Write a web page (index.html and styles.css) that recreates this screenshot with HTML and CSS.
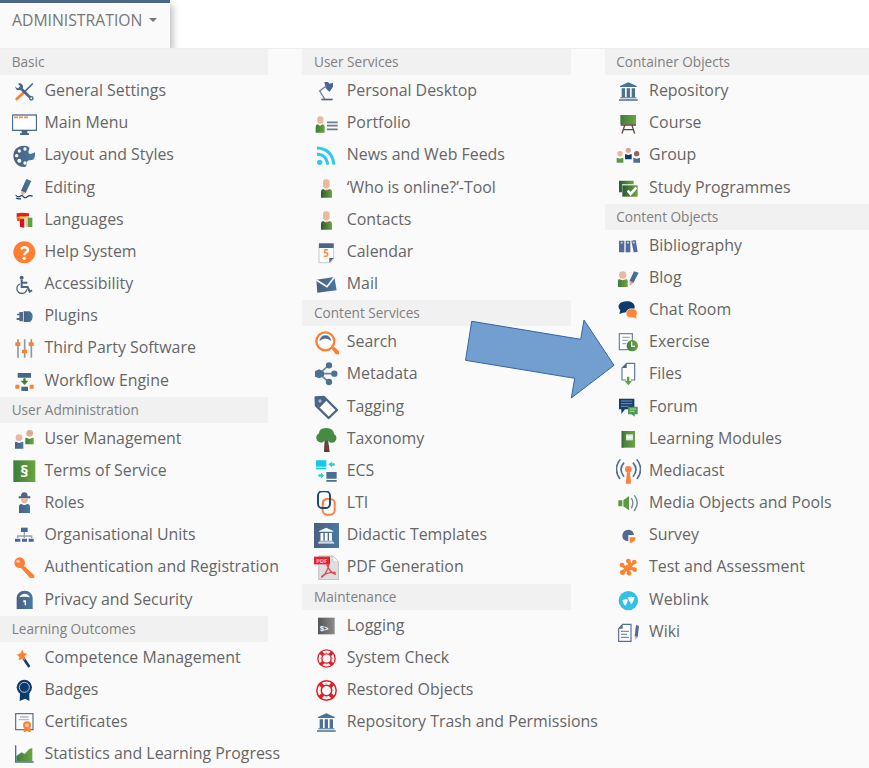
FILE: index.html
```html
<!DOCTYPE html>
<html lang="en">
<head>
<meta charset="utf-8">
<title>Administration</title>
<link rel="stylesheet" href="styles.css">
</head>
<body>
<svg class="defs" width="0" height="0" aria-hidden="true">
  <defs>
    <linearGradient id="gr"><stop offset="0" stop-color="#3d7d3e"/><stop offset="1" stop-color="#6ca43f"/></linearGradient>
    <linearGradient id="bl"><stop offset="0" stop-color="#4a6080"/><stop offset="1" stop-color="#4878a0"/></linearGradient>
    <linearGradient id="gy"><stop offset="0" stop-color="#555"/><stop offset="1" stop-color="#8c8c8c"/></linearGradient>
    <linearGradient id="dg"><stop offset="0" stop-color="#285b36"/><stop offset="1" stop-color="#6ca43f"/></linearGradient>
    <symbol id="person" viewBox="0 0 75 75">
      <rect x="27" y="10" width="20" height="27" rx="9" fill="#e8b8a0"/>
      <path d="M21 65V47q0-7 7-8l9 5 9-5q8 1 8 8v18z" fill="url(#dg)"/>
      <path d="M32 37h11l-6 8z" fill="#f3d9d0"/><path d="M35 41l3 5 2-5z" fill="#d33"/>
    </symbol>
    <symbol id="temple" viewBox="0 0 75 75">
      <path d="M37 10l25 11v3H12v-3z"/><path d="M17 28h10v27H17zM32 28h10v27H32zM47 28h10v27H47z"/><path d="M13 55h48v3H13zM9 61h56v4H9z"/>
    </symbol>
    <symbol id="buoy" viewBox="0 0 75 75">
      <g fill="none" stroke="#dc2028"><circle cx="37.500" cy="37.500" r="26" stroke-width="4"/><circle cx="37.500" cy="37.500" r="14" stroke-width="4"/>
      <path d="M19 18l9 9M56 18l-9 9M19 57l9-9M56 57l-9-9" stroke-width="10"/><path d="M37 18v2M37 55v2M18 37h2M55 37h2" stroke="#e88" stroke-width="3"/></g>
    </symbol>
  </defs>
</svg>

<header class="bar">
  <div class="tab">ADMINISTRATION<span class="caret"></span></div>
</header>

<main class="menu">
  <section class="col">
    <h2>Basic</h2>
    <ul>
      <li><svg viewBox="0 0 75 75"><path d="M14 60l24-22" stroke="#ff7f33" stroke-width="8" stroke-linecap="round"/><path d="M36 40L61 15" stroke="#4a6c90" stroke-width="5" stroke-linecap="round"/><path d="M22 24l34 33" stroke="#4a6588" stroke-width="8"/><path d="M18 15l7 7-3 6-8-1-4-6q0 12 9 13 13 0 14-10 0-10-11-11z" fill="#4a6588"/><circle cx="58" cy="58" r="5" fill="#fafafa" stroke="#4a6588" stroke-width="4"/></svg>General Settings</li>
      <li><svg viewBox="0 0 75 75"><rect x="1.500" y="12" width="72" height="46" fill="#fff" stroke="#4b6f92" stroke-width="4"/><path d="M6 19h42" stroke="#ff8850" stroke-width="5" stroke-dasharray="12 3"/><path d="M29 58h17v9h5v5H24v-5h5z" fill="#4b6585"/></svg>Main Menu</li>
      <li><svg viewBox="0 0 75 75"><path d="M38 8C18 7 4 20 4 38c0 19 14 34 32 34 9 0 7-6 8-12 1-7 7-9 15-9 9 0 11-12 10-23l-13 5q-9-1-6-10l3-8Q47 8 38 8z" fill="url(#bl)"/><g fill="#fafafa"><circle cx="39" cy="18" r="5"/><circle cx="22" cy="24" r="5"/><circle cx="14" cy="38" r="5"/><circle cx="22" cy="53" r="6"/><circle cx="39" cy="60" r="5"/></g></svg>Layout and Styles</li>
      <li><svg viewBox="0 0 75 75"><path d="M43 9l15 6-17 36-14-7z" fill="url(#bl)"/><path d="M27 44l14 7-12 8z" fill="#e8b090"/><path d="M11 57q6 8 13 4 6-5 11 2 5 5 11-1 7-6 16-1M12 66q8 4 15 2" fill="none" stroke="#123d66" stroke-width="3.500"/></svg>Editing</li>
      <li><svg viewBox="0 0 75 75"><path d="M14 16l17-2 20 2v9l-37 5z" fill="#e32020"/><path d="M15 28l10-3 25 1v5l-35 2z" fill="#ffc928"/><path d="M23 32h14v27l-13-2z" fill="#d8141c"/><path d="M14 29h9v10h-7z" fill="#ef4a20"/><path d="M40 31h6v26h-6z" fill="#c2d9b0"/><path d="M47 29h14v28H47z" fill="#65a03e"/></svg>Languages</li>
      <li><svg viewBox="0 0 75 75"><circle cx="37" cy="37" r="33" fill="#ff7f33"/><path d="M27 27q10-9 18-3 7 7-2 13-6 4-6 9" fill="none" stroke="#fff" stroke-width="7.500"/><circle cx="37" cy="55" r="5" fill="#fff"/></svg>Help System</li>
      <li><svg viewBox="0 0 75 75"><circle cx="29" cy="17" r="6" fill="#4b6585"/><path d="M29 23v22h18l6 14 7-4M30 32h16" fill="none" stroke="#4b6585" stroke-width="6"/><path d="M24 36q-11 5-9 17 5 13 18 11 9-2 12-12" fill="none" stroke="#4b6585" stroke-width="4"/></svg>Accessibility</li>
      <li><svg viewBox="0 0 75 75"><path d="M35 22h19q8 6 8 16t-8 16H35z" fill="url(#bl)"/><path d="M22 24h11v28H22zM15 29h9v5h-9zM14 42h10v6H14z" fill="#52698a"/></svg>Plugins</li>
      <li><svg viewBox="0 0 75 75"><path d="M18 10v55M38 10v55M58 10v55" stroke="#8a9bb0" stroke-width="5"/><path d="M10 19h15v11H10zM30 41h15v11H30zM50 19h15v11H50z" fill="#ff7f33"/></svg>Third Party Software</li>
      <li><svg viewBox="0 0 75 75"><path d="M17 12h40v14H17zM28 53h20v13H28z" fill="#4b6585"/><path d="M34 28h7v7h8L38 48 26 35h8z" fill="#447a32"/><path d="M10 47h12v12H10zM53 47h12v12H53z" fill="#ff7f33"/></svg>Workflow Engine</li>
    </ul>
    <h2>User Administration</h2>
    <ul>
      <li><svg viewBox="0 0 75 75"><circle cx="21" cy="32" r="10" fill="#e8b8a0"/><circle cx="53" cy="19" r="10" fill="#e0ab92"/><path d="M9 65V47q0-3 3-3l9 4 10-4q3 0 3 3v18z" fill="url(#bl)"/><path d="M40 52V35q0-3 3-3l9 4 10-4q3 0 3 3v17z" fill="url(#gr)"/></svg>User Management</li>
      <li><svg viewBox="0 0 75 75"><rect x="4" y="4" width="66" height="65" fill="url(#gr)"/><text x="37" y="53" font-size="50" font-weight="700" text-anchor="middle" fill="#fff">§</text></svg>Terms of Service</li>
      <li><svg viewBox="0 0 75 75"><path d="M27 16q0-12 10-12t10 12h8v6H20v-6z" fill="#4b6585"/><path d="M27 22h21q0 15-11 15T27 22z" fill="#e8b8a0"/><path d="M21 66V47q0-8 7-8l9 4 9-4q8 0 8 8v19z" fill="url(#bl)"/></svg>Roles</li>
      <li><svg viewBox="0 0 75 75"><path d="M27 14h20v13H27z" fill="#4b6595"/><path d="M37 27v18M17 45V39h42v7" fill="none" stroke="#93a3b5" stroke-width="4"/><path d="M9 47h16v9H9zM30 47h15v9H30zM50 47h15v9H50z" fill="#4b6595"/></svg>Organisational Units</li>
      <li><svg viewBox="0 0 75 75"><circle cx="23" cy="23" r="16" fill="#ff7f33"/><path d="M30 30l35 32v5H55L27 36z" fill="#ff7f33" stroke="#ff7f33" stroke-width="4"/><circle cx="18" cy="19" r="5" fill="#ffd0b0"/></svg>Authentication and Registration</li>
      <li><svg viewBox="0 0 75 75"><path d="M14 63V29Q16 9 38 8q22 1 24 21v34z" fill="url(#bl)"/><path d="M22 28q5-11 16-11t16 11q-16-4-32 0z" fill="#fafafa"/><path d="M34 37h8v15h-4V43h-4z" fill="#fff"/></svg>Privacy and Security</li>
    </ul>
    <h2>Learning Outcomes</h2>
    <ul>
      <li><svg viewBox="0 0 75 75"><path d="M34 36l18 27" stroke="#173d68" stroke-width="8"/><path d="M32 13l2 9 10 2-8 7 3 11-9-5-9 5 2-9-7-7 9-3z" fill="#ff7f33" stroke="#ff7f33" stroke-width="2"/></svg>Competence Management</li>
      <li><svg viewBox="0 0 75 75"><path d="M24 42h28v27l-12-7-17 7z" fill="#0c3b6c"/><circle cx="37" cy="28" r="23" fill="#0c3b6c"/><circle cx="37" cy="28" r="15" fill="none" stroke="#b4c5d6" stroke-width="3"/></svg>Badges</li>
      <li><svg viewBox="0 0 75 75"><rect x="11" y="11" width="52" height="48" fill="#fff" stroke="#4b6f92" stroke-width="3.500"/><path d="M24 21h26M20 29h31" stroke="#aab8c8" stroke-width="4"/><circle cx="45" cy="46" r="9" fill="#ffc9a6" stroke="#ff7f33" stroke-width="6"/><path d="M36 55h7l2 5 3-5h8v12l-7-2-4-3-4 3-6 2z" fill="#ff7f33"/></svg>Certificates</li>
      <li><svg viewBox="0 0 75 75"><path d="M13 58V42l16-11 9 5 14-15 9-3v40z" fill="url(#gr)"/><path d="M11 10v50h54" fill="none" stroke="#4b6f92" stroke-width="4"/></svg>Statistics and Learning Progress</li>
    </ul>
  </section>

  <section class="col">
    <h2>User Services</h2>
    <ul>
      <li><svg viewBox="0 0 75 75"><path d="M31 9h11l4 5 11-3v12L47 38q-7-3-12-12z" fill="#4b6595"/><path d="M38 20L17 36l15 24" fill="none" stroke="#6d809c" stroke-width="4"/><path d="M22 59h34v5H22z" fill="#4b6585"/></svg>Personal Desktop</li>
      <li><svg viewBox="0 0 75 75"><rect x="10" y="16" width="18" height="22" rx="8" fill="#e8b8a0"/><path d="M5 65V48q0-7 6-8l7 4 8-4q6 1 6 8v17z" fill="url(#gr)"/><path d="M39 34h32M39 44h32M39 55h32" stroke="#687c98" stroke-width="5"/></svg>Portfolio</li>
      <li><svg viewBox="0 0 75 75"><circle cx="17" cy="58" r="8" fill="#33c8e8"/><path d="M9 34q28 0 32 31M9 15q45 2 51 50" fill="none" stroke="#33c8e8" stroke-width="9"/></svg>News and Web Feeds</li>
      <li><svg><use href="#person"/></svg>‘Who is online?’-Tool</li>
      <li><svg><use href="#person"/></svg>Contacts</li>
      <li><svg viewBox="0 0 75 75"><path d="M15 12h44v45l-12 11H15z" fill="#fff" stroke="#c0cad5" stroke-width="3"/><path d="M15 10h44v14H15z" fill="#4b6585"/><path d="M46 54h13L46 68z" fill="#4b6585"/><text x="36" y="52" font-size="30" font-weight="700" text-anchor="middle" fill="#ff8a3d">5</text></svg>Calendar</li>
      <li><svg viewBox="0 0 75 75"><path d="M7 23l54-8 7 40-58 7z" fill="url(#bl)"/><path d="M7 24l32 20 22-28" fill="none" stroke="#fff" stroke-width="5"/></svg>Mail</li>
    </ul>
    <h2>Content Services</h2>
    <ul>
      <li><svg viewBox="0 0 75 75"><path d="M53 56l8-6 14 14v9H65z" fill="#ff7f33"/><circle cx="34" cy="34" r="27" fill="#fff" stroke="#ff7f33" stroke-width="7"/><path d="M16 33q18-15 36 0-4-17-18-17T16 33z" fill="#4b6f92"/></svg>Search</li>
      <li><svg viewBox="0 0 75 75"><path d="M16 35L45 9M16 35h45M16 35l29 26" stroke="#66849e" stroke-width="5"/><g fill="#4b7195"><path d="M3 27l13-5 14 7v13l-14 7-13-5z"/><circle cx="45" cy="10" r="9.500"/><circle cx="61" cy="35" r="9.500"/><circle cx="45" cy="60" r="9.500"/></g></svg>Metadata</li>
      <li><svg viewBox="0 0 75 75"><path d="M5 7l25-1 39 39-25 24L6 32z" fill="#fff" stroke="#4b6585" stroke-width="7" stroke-linejoin="round"/><path d="M4 6h27l8 9-22 23-13-12z" fill="#4b6585"/><circle cx="18" cy="18" r="5" fill="#a9b7c8"/></svg>Tagging</li>
      <li><svg viewBox="0 0 75 75"><path d="M32 38h10l5 37H30z" fill="#5b3b32"/><path d="M24 5q12-4 25 0 11 5 11 16 9 6 7 16-5 13-18 10l-7-6H32l-8 6Q9 47 7 34q-1-10 8-15 0-10 9-14z" fill="#458b43"/><path d="M36 42h3v26" stroke="#8a6a5e" stroke-width="2" fill="none"/></svg>Taxonomy</li>
      <li><svg viewBox="0 0 75 75"><path d="M6 4h31v19H6zM6 26h31v5H6z" fill="#12cbe8"/><path d="M43 16l11-8v5h8v7h-8v5zM31 50l-10 8v-5h-8v-7h8v-5z" fill="#32c8d8"/><path d="M37 39h31v20H37zM37 63h31v5H37z" fill="#4b6f92"/></svg>ECS</li>
      <li><svg viewBox="0 0 75 75"><rect x="26" y="24" width="36" height="47" rx="13" fill="none" stroke="#ff7f45" stroke-width="6"/><rect x="12" y="1" width="36" height="50" rx="13" fill="none" stroke="#174b7a" stroke-width="6"/><path d="M27 43V36q1-11 13-12" fill="none" stroke="#ff7f45" stroke-width="6"/></svg>LTI</li>
      <li><svg viewBox="0 0 75 75"><path d="M0 0h75v75H0z" fill="url(#bl)"/><use href="#temple" x="5" y="6" width="64" height="64" fill="#fff"/></svg>Didactic Templates</li>
      <li><svg viewBox="0 0 75 75"><path d="M14 3h43l17 17v54H14z" fill="#dedede" stroke="#aaa" stroke-width="2"/><path d="M57 3v17h17z" fill="#f8f8f8" stroke="#b0b0b0"/><path d="M22 68q11-8 18-24 7-18 2-19-7 1 2 15 7 14 22 18M22 65q15-14 43-13" fill="none" stroke="#df4850" stroke-width="4"/><path d="M0 5h48v23H0z" fill="#ee2024"/><text x="23" y="23" font-size="17" font-weight="700" text-anchor="middle" fill="#ffc8c8">PDF</text></svg>PDF Generation</li>
    </ul>
    <h2>Maintenance</h2>
    <ul>
      <li><svg viewBox="0 0 75 75"><path d="M12 11h50v50H12z" fill="url(#gy)"/><text class="mono" x="17" y="52" font-size="22" font-weight="700" fill="#fff">$&gt;</text></svg>Logging</li>
      <li><svg><use href="#buoy"/></svg>System Check</li>
      <li><svg viewBox="4 4 67 67"><use href="#buoy" width="75" height="75"/></svg>Restored Objects</li>
      <li><svg class="blue"><use href="#temple"/></svg>Repository Trash and Permissions</li>
    </ul>
  </section>

  <section class="col last">
    <h2>Container Objects</h2>
    <ul>
      <li><svg class="blue"><use href="#temple"/></svg>Repository</li>
      <li><svg viewBox="0 0 75 75"><path d="M13 12h47v28H13z" fill="url(#gr)"/><path d="M14 42h46M26 43l-8 25M48 43l8 25M22 56h30" fill="none" stroke="#614038" stroke-width="4"/></svg>Course</li>
      <li><svg class="wide" viewBox="0 0 75 75"><circle cx="12" cy="32" r="8" fill="#eab7a0"/><circle cx="37" cy="22" r="8" fill="#dba993"/><circle cx="62" cy="32" r="8" fill="#8b6a60"/><path d="M2 59V44l10 3 10-3v15z" fill="#5b9841"/><path d="M27 49V33l10 3 10-3v16z" fill="#0c3b6c"/><path d="M52 59V44l10 3 10-3v15z" fill="#4b7195"/></svg>Group</li>
      <li><svg viewBox="0 0 75 75"><path d="M9 14h44v11H18v24H9z" fill="url(#dg)"/><path d="M19 28h46v34H19z" fill="url(#dg)"/><path d="M35 44l9 10 17-19" fill="none" stroke="#fff" stroke-width="8"/></svg>Study Programmes</li>
    </ul>
    <h2>Content Objects</h2>
    <ul>
      <li><svg viewBox="0 0 75 75"><path d="M9 20h16v35H9zM29 20h14v35H29zM46 20l13-2 6 36-12 1z" fill="#526c95"/><path d="M14 26h6M33 26h6M50 26l6-1" stroke="#c5d0dc" stroke-width="5"/></svg>Bibliography</li>
      <li><svg viewBox="0 0 75 75"><circle cx="20" cy="27" r="11" fill="#eab7a0"/><path d="M6 63V44q0-4 4-4l10 3 11-3q4 0 4 4v19z" fill="url(#gr)"/><path d="M54 16l14 4-16 31-11-7z" fill="url(#bl)"/><path d="M41 44l11 7-11 8z" fill="#dda68c"/></svg>Blog</li>
      <li><svg viewBox="0 0 75 75"><path d="M32 10c14 0 24 6 24 17S45 43 32 43l-11 1-11 4 3-11C0 22 13 10 32 10z" fill="#0c3b6c"/><path d="M47 32c11 0 17 5 17 13q0 5-4 9l5 10-12-5c-15 2-23-4-23-13q2-14 17-14z" fill="#ff8538" stroke="#fafafa" stroke-width="2"/></svg>Chat Room</li>
      <li><svg viewBox="0 0 75 75"><rect x="10" y="11" width="39" height="48" fill="#fff" stroke="#6880a0" stroke-width="3.500"/><path d="M19 22h22M19 31h16M19 41h12" stroke="#9aabbf" stroke-width="4"/><circle cx="49" cy="47" r="17" fill="url(#gr)"/><path d="M47 35v14h10" fill="none" stroke="#fff" stroke-width="4"/></svg>Exercise</li>
      <li><svg viewBox="0 0 75 75"><path d="M31 54H18V18L32 4h24v50H44" fill="#fff" stroke="#5b789b" stroke-width="3.500"/><path d="M18 18L32 4v14z" fill="#4b6585"/><path d="M33 44h7v13h8L37 70 26 57h7z" fill="#65a03e"/></svg>Files</li>
      <li><svg viewBox="0 0 75 75"><path d="M9 11h46v32H27L16 57V43H9z" fill="#123e6d"/><path d="M15 18h34M15 26h34M15 34h22" stroke="#7793b3" stroke-width="3"/><path d="M36 35h29v23H56v7l-10-7H36z" fill="#4c9950"/><path d="M41 42h19M41 49h15" stroke="#b9d9b6" stroke-width="3"/></svg>Forum</li>
      <li><svg viewBox="0 0 75 75"><path d="M17 12h40v50H17z" fill="url(#gr)"/><path d="M17 12h5v50h-5z" fill="#356f3b"/><path d="M30 22h21v18H30z" fill="#dce9d5"/><path d="M33 28h16v6H33z" fill="#fff"/></svg>Learning Modules</li>
      <li><svg viewBox="0 0 75 75"><path d="M24 11q-18 20 0 42M13 1Q-10 30 12 60M51 11q18 20 0 42M62 1q23 29 1 59" fill="none" stroke="#536f94" stroke-width="5"/><circle cx="37" cy="31" r="10" fill="#ff7f45"/><path d="M33 40h9l3 34H29z" fill="#ff7f45"/></svg>Mediacast</li>
      <li><svg viewBox="0 0 75 75"><path d="M7 28h12v18H7zM22 28l17-13v43L22 46z" fill="#5d9b3d"/><path d="M46 21q9 15 0 31M55 13q18 23-1 47" fill="none" stroke="#6f84a3" stroke-width="4"/></svg>Media Objects and Pools</li>
      <li><svg viewBox="0 0 75 75"><path d="M54 36H37v19Q19 54 19 39q0-18 19-19 15 2 16 16z" fill="#526a91"/><path d="M41 43h18q-1 16-18 17z" fill="#ff832f"/></svg>Survey</li>
      <li><svg viewBox="0 0 75 75"><path d="M20 51L54 23M18 31l11 7M38 19l5 12M56 44l-12-6M40 54l-6-10" fill="none" stroke="#ff832f" stroke-width="9"/><path d="M30 30l15-3 4 17-17 4z" fill="#ff832f"/><g fill="#ff832f"><circle cx="18" cy="30" r="7"/><circle cx="37" cy="18" r="7"/><circle cx="55" cy="21" r="7"/><circle cx="56" cy="44" r="7"/><circle cx="39" cy="55" r="7"/><circle cx="20" cy="52" r="8"/></g></svg>Test and Assessment</li>
      <li><svg viewBox="0 0 75 75"><circle cx="37" cy="38" r="29" fill="#31c1e3"/><path d="M19 37l11-5 6 4-3 8-5 9-5-5zM36 28l8-2 12 2-3 9-6 12-6-8-4-8z" fill="#fff"/></svg>Weblink</li>
      <li><svg viewBox="0 0 75 75"><path d="M8 26L20 13h25v51H8z" fill="#fff" stroke="#536f94" stroke-width="3.500"/><path d="M8 26L20 13v13z" fill="#536f94"/><path d="M15 34h24M15 43h18M15 52h24" stroke="#7a90aa" stroke-width="3.500"/><path d="M60 15l9 3-4 34-9-3z" fill="#526a91"/><path d="M56 49l9 3-7 8z" fill="#d8b39d"/></svg>Wiki</li>
    </ul>
  </section>
</main>

<svg class="pointer" viewBox="465 319 150 80"><path d="M471.700 321.300L580.700 339.300 584 320 614 365.300 571.300 398 574.700 378.300 465.500 360.300z" fill="#729fcf" stroke="#3465a4"/></svg>
</body>
</html>
```

FILE: styles.css
```css
* { box-sizing: border-box; }

body {
  margin: 0;
  width: 869px;
  height: 768px;
  overflow: hidden;
  position: relative;
  background: #fff;
  color: #666;
  font-family: "Open Sans", "Noto Sans", sans-serif;
}

.defs { display: block; }

.bar {
  height: 48px;
  overflow: hidden;
}

.tab {
  display: flex;
  align-items: center;
  width: 169.500px;
  height: 48px;
  padding: 0 0 12px 12px;
  border-top: 3px solid #4c6586;
  background: #fafafa;
  box-shadow: 2px 5px 8px rgba(0, 0, 0, .3);
  color: #777;
  font-size: 15.750px;
  white-space: nowrap;
}

.caret {
  margin-left: 7px;
  border: 4.500px solid transparent;
  border-top-color: #777;
  border-bottom: 0;
}

.menu {
  display: grid;
  grid-template-columns: 302.300px 302.300px 1fr;
  height: 720px;
  border-top: 1px solid #eee;
  background: #fafafa;
}

h2 {
  width: 268.300px;
  height: 26.100px;
  margin: 0;
  padding-left: 11.700px;
  background: #f1f1f1;
  color: #808080;
  font-size: 13.600px;
  font-weight: 400;
  line-height: 26px;
}

.last h2 { width: auto; }

ul {
  margin: 0;
  padding: 0;
  list-style: none;
}

li {
  display: flex;
  gap: 7.800px;
  height: 32.160px;
  padding-left: 11.700px;
  font-size: 15.900px;
  line-height: 31px;
  white-space: nowrap;
}

li svg {
  flex: none;
  width: 25px;
  height: 25px;
  margin-top: 4px;
}

.blue { fill: #4b7195; }

.mono { font-family: "Liberation Mono", monospace; }

.pointer {
  position: absolute;
  left: 465px;
  top: 319px;
  width: 150px;
  height: 80px;
}
```
